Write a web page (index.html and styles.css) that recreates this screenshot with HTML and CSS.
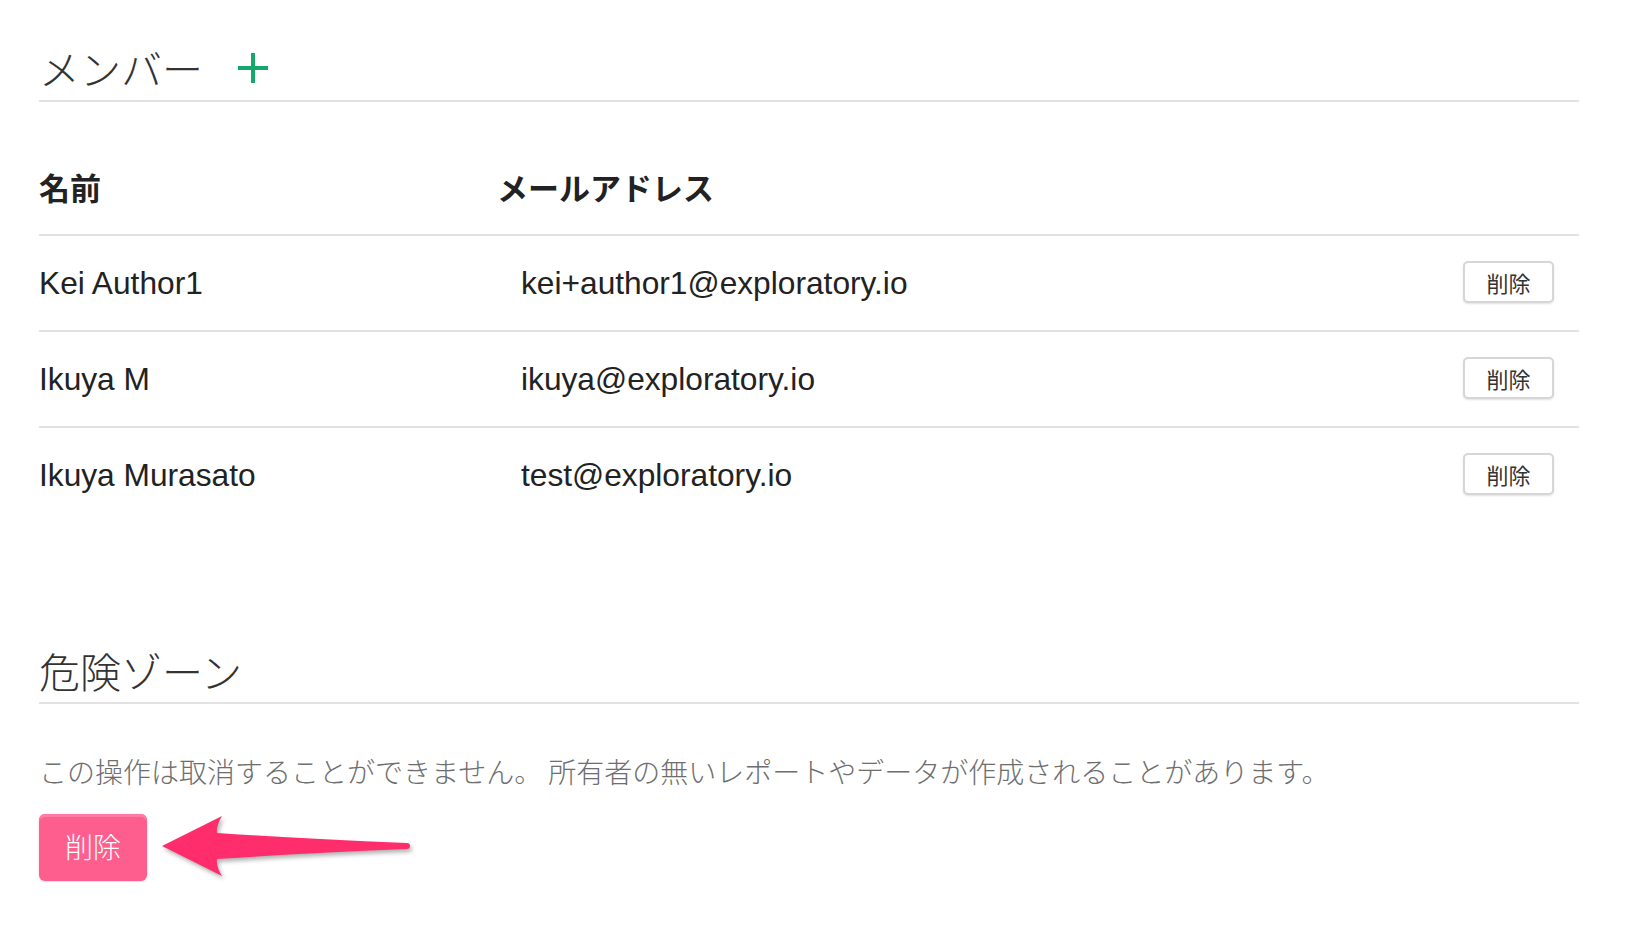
FILE: index.html
```html
<!DOCTYPE html>
<html lang="ja">
<head>
    <meta charset="UTF-8">
    <title>メンバー</title>
    <link rel="stylesheet" href="styles.css">
</head>
<body>

<div class="page">
    <h2 class="section-title">
        メンバー
        <svg class="add-icon" width="32" height="32" viewBox="0 0 32 32">
            <path d="M16 1v30M1 16h30" stroke="#14a86b" stroke-width="4" fill="none"/>
        </svg>
    </h2>

    <table class="member-table">
        <thead>
            <tr>
                <th class="col-name">名前</th>
                <th class="col-mail">メールアドレス</th>
                <th></th>
            </tr>
        </thead>
        <tbody>
            <tr>
                <td>Kei Author1</td>
                <td class="mail">kei+author1@exploratory.io</td>
                <td class="action"><button class="btn-small">削除</button></td>
            </tr>
            <tr>
                <td>Ikuya M</td>
                <td class="mail">ikuya@exploratory.io</td>
                <td class="action"><button class="btn-small">削除</button></td>
            </tr>
            <tr>
                <td>Ikuya Murasato</td>
                <td class="mail">test@exploratory.io</td>
                <td class="action"><button class="btn-small">削除</button></td>
            </tr>
        </tbody>
    </table>

    <!-- 危険ゾーン -->
    <h2 class="section-title danger-title">危険ゾーン</h2>
    <p class="danger-text">この操作は取消することができません。 所有者の無いレポートやデータが作成されることがあります。</p>
    <div class="danger-actions">
        <button class="btn-danger">削除</button>
        <svg class="arrow" width="265" height="80" viewBox="0 0 265 80">
            <path d="M7 38 L67 8 Q61 18 62 25 Q150 31 252 35 A3 3 0 0 1 252 41 Q150 45 62 51 Q61 59 67 68 Z" fill="#ff2d6c"/>
        </svg>
    </div>
</div>

</body>
</html>
```

FILE: styles.css
```css
body {
    margin: 0;
    background: #fff;
    font-family: "Liberation Sans", "Noto Sans CJK JP", sans-serif;
    color: #222;
}
.page {
    width: 1540px;
    padding: 43px 0 0 39px;
}
.section-title {
    margin: 0;
    height: 48px;
    padding-bottom: 9px;
    border-bottom: 2px solid #e2e2e2;
    font-family: "Noto Sans CJK JP", sans-serif;
    font-size: 41px;
    font-weight: 300;
    line-height: 48px;
    color: #333;
    display: flex;
    align-items: center;
}
.add-icon {
    margin-left: 34px;
    margin-top: 2px;
}

/* jadval */
.member-table {
    width: 100%;
    margin-top: 65px;
    border-collapse: collapse;
}
.member-table th {
    text-align: left;
    font-family: "Noto Sans CJK JP", sans-serif;
    font-size: 31px;
    font-weight: 700;
    line-height: 40px;
    padding: 0 0 27px;
    border-bottom: 2px solid #e2e2e2;
    color: #222;
}
.member-table .col-name {
    width: 458px;
}
.member-table td {
    height: 94px;
    padding: 0;
    font-size: 31.7px;
    vertical-align: middle;
    border-bottom: 2px solid #e2e2e2;
    color: #222;
}
.member-table tbody tr:last-child td {
    border-bottom: none;
}
.member-table td.mail {
    padding-left: 24px;
}
.member-table td.action {
    text-align: right;
    padding-right: 25px;
}
.btn-small {
    width: 91px;
    height: 42px;
    margin-top: -2px;
    background: #fff;
    border: 2px solid #d6d6d6;
    border-radius: 5px;
    box-shadow: 0 1px 2px rgba(0, 0, 0, 0.12);
    font-family: "Noto Sans CJK JP", sans-serif;
    font-size: 22px;
    color: #333;
    cursor: pointer;
}

.danger-title {
    margin-top: 124px;
    padding-bottom: 8px;
}
.danger-text {
    margin: 47px 0 0;
    font-family: "Noto Sans CJK JP", sans-serif;
    font-size: 28px;
    font-weight: 300;
    line-height: 40px;
    color: #6e6e6e;
}
.danger-actions {
    position: relative;
    margin-top: 23px;
    height: 68px;
}
.btn-danger {
    width: 108px;
    height: 67px;
    padding: 0 0 4px;
    background: #fe5e8e;
    border: none;
    border-radius: 6px;
    box-shadow: inset 0 3px 0 #ff7ba4, 0 1px 3px rgba(0, 0, 0, 0.15);
    font-family: "Noto Sans CJK JP", sans-serif;
    font-size: 28px;
    font-weight: 300;
    color: #fff;
    cursor: pointer;
}
.arrow {
    position: absolute;
    left: 116px;
    top: -6px;
    filter: drop-shadow(2px 3px 2px rgba(0, 0, 0, 0.3));
}
```
